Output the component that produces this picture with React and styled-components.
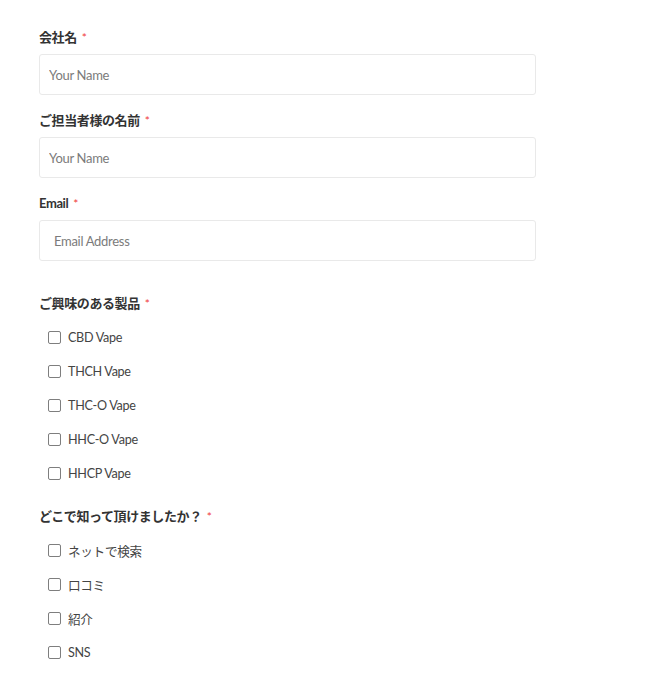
import React from 'react';
import styled, { createGlobalStyle } from 'styled-components';

const GlobalStyle = createGlobalStyle`
  body {
    margin: 0;
    background: #fff;
    font-family: Lato, "Noto Sans CJK JP", sans-serif;
    color: #333;
  }
`;

const Form = styled.form`
  padding: 27px 0 0 39px;
  width: 497px;
`;

const Field = styled.div`
  margin-bottom: ${p => p.$gap || 15}px;
`;

const Label = styled.div`
  font-size: 13px;
  font-weight: bold;
  line-height: 20px;
  height: 20px;
  letter-spacing: -0.4px;
  color: #333;
  margin-bottom: 7px;
`;

const Star = styled.span`
  color: #f03a3a;
  font-weight: normal;
  font-size: 12px;
  margin-left: 5px;
`;

const Input = styled.input`
  display: block;
  box-sizing: border-box;
  width: 497px;
  height: 41px;
  border: 1px solid #e9e9e9;
  border-radius: 3px;
  padding: 0 ${p => p.$pad || 9}px;
  font-family: Lato, "Noto Sans CJK JP", sans-serif;
  font-size: 13px;
  letter-spacing: -0.3px;
  color: #333;
  outline: none;
  &::placeholder {
    color: #7b7b7b;
  }
`;

const CheckList = styled.div`
  padding-top: 1px;
`;

const CheckRow = styled.label`
  display: flex;
  align-items: center;
  height: 33.8px;
  padding-left: 9px;
  font-size: 12.6px;
  letter-spacing: -0.3px;
  color: #444;
`;

const Box = styled.span`
  box-sizing: border-box;
  width: 13px;
  height: 13px;
  border: 1px solid #7e7e7e;
  border-radius: 2px;
  margin-right: 7px;
  flex-shrink: 0;
`;

const products = ['CBD Vape', 'THCH Vape', 'THC-O Vape', 'HHC-O Vape', 'HHCP Vape'];
const sources = ['ネットで検索', '口コミ', '紹介', 'SNS'];

const App = () => (
  <>
    <GlobalStyle />
    <Form>
      <Field>
        <Label>会社名<Star>*</Star></Label>
        <Input placeholder="Your Name" />
      </Field>
      <Field>
        <Label>ご担当者様の名前<Star>*</Star></Label>
        <Input placeholder="Your Name" />
      </Field>
      <Field $gap={32}>
        <Label>Email<Star>*</Star></Label>
        <Input placeholder="Email Address" $pad={14} />
      </Field>
      <Field $gap={16}>
        <Label>ご興味のある製品<Star>*</Star></Label>
        <CheckList>
          {products.map(p => (
            <CheckRow key={p}><Box />{p}</CheckRow>
          ))}
        </CheckList>
      </Field>
      <Field>
        <Label>どこで知って頂けましたか？<Star>*</Star></Label>
        <CheckList>
          {sources.map(s => (
            <CheckRow key={s}><Box />{s}</CheckRow>
          ))}
        </CheckList>
      </Field>
    </Form>
  </>
);

export default App;
